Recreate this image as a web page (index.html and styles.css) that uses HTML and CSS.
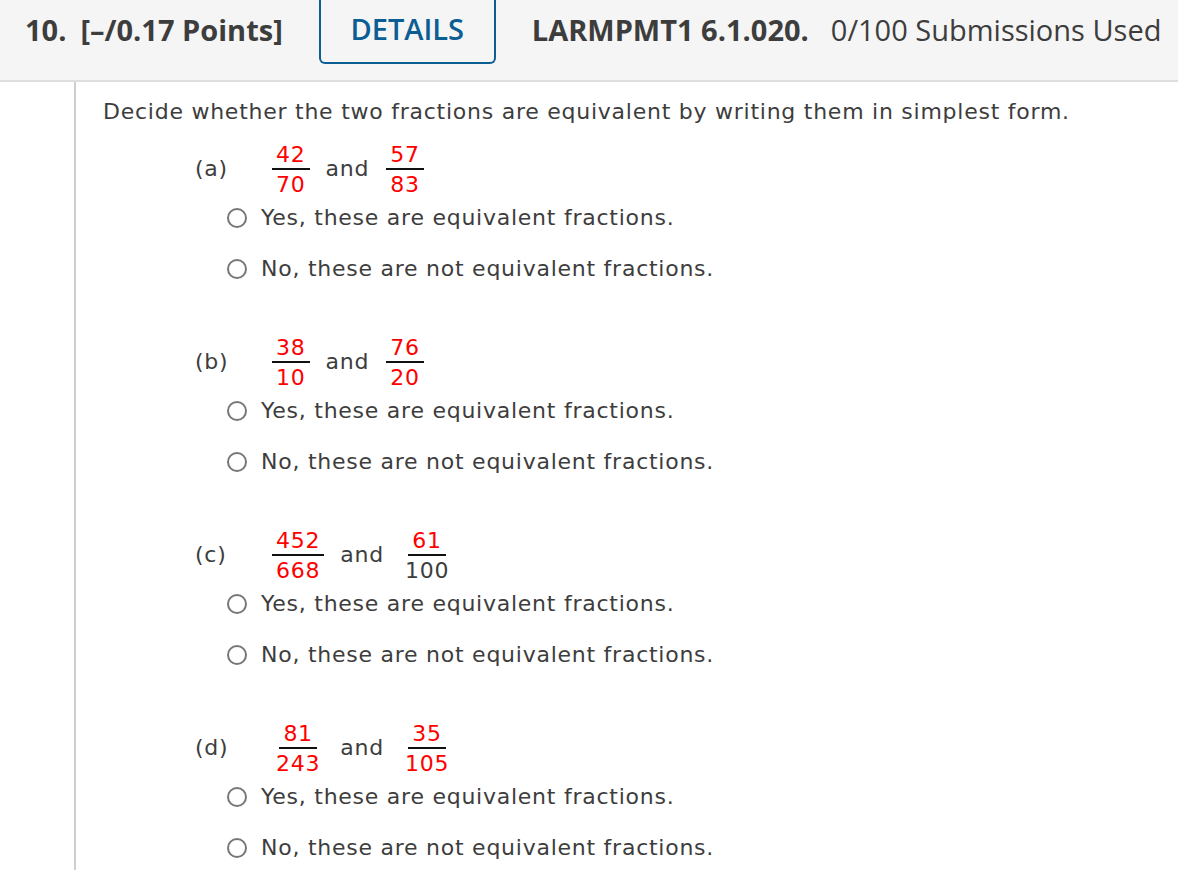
FILE: index.html
```html
<!DOCTYPE html>
<html lang="en">
<head>
  <meta charset="UTF-8">
  <title>Question 10</title>
  <link rel="stylesheet" href="styles.css">
</head>
<body>
  <div class="question-head">
    <span class="q-num">10.</span>
    <span class="q-points">[&ndash;/0.17 Points]</span>
    <a href="#" class="details-btn">DETAILS</a>
    <span class="q-code">LARMPMT1 6.1.020.</span>
    <span class="q-subs">0/100 Submissions Used</span>
  </div>

  <div class="question-body">
    <p class="prompt">Decide whether the two fractions are equivalent by writing them in simplest form.</p>

    <div class="part">
      <div class="part-row">
        <span class="part-label">(a)</span>
        <span class="frac"><span class="num red">42</span><span class="den red">70</span></span>
        <span class="and">and</span>
        <span class="frac"><span class="num red">57</span><span class="den red">83</span></span>
      </div>
      <label class="option"><span class="radio"></span>Yes, these are equivalent fractions.</label>
      <label class="option"><span class="radio"></span>No, these are not equivalent fractions.</label>
    </div>

    <div class="part">
      <div class="part-row">
        <span class="part-label">(b)</span>
        <span class="frac"><span class="num red">38</span><span class="den red">10</span></span>
        <span class="and">and</span>
        <span class="frac"><span class="num red">76</span><span class="den red">20</span></span>
      </div>
      <label class="option"><span class="radio"></span>Yes, these are equivalent fractions.</label>
      <label class="option"><span class="radio"></span>No, these are not equivalent fractions.</label>
    </div>

    <div class="part">
      <div class="part-row">
        <span class="part-label">(c)</span>
        <span class="frac"><span class="num red">452</span><span class="den red">668</span></span>
        <span class="and">and</span>
        <span class="frac"><span class="num red">61</span><span class="den">100</span></span>
      </div>
      <label class="option"><span class="radio"></span>Yes, these are equivalent fractions.</label>
      <label class="option"><span class="radio"></span>No, these are not equivalent fractions.</label>
    </div>

    <div class="part">
      <div class="part-row">
        <span class="part-label">(d)</span>
        <span class="frac"><span class="num red">81</span><span class="den red">243</span></span>
        <span class="and">and</span>
        <span class="frac"><span class="num red">35</span><span class="den red">105</span></span>
      </div>
      <label class="option"><span class="radio"></span>Yes, these are equivalent fractions.</label>
      <label class="option"><span class="radio"></span>No, these are not equivalent fractions.</label>
    </div>
  </div>
</body>
</html>
```

FILE: styles.css
```css
body {
  margin: 0;
  padding: 0;
  background-color: #ffffff;
  color: #3d3d3d;
  font-family: "DejaVu Sans", Verdana, sans-serif;
  overflow: hidden;
}

/* question header bar */
.question-head {
  display: flex;
  align-items: flex-start;
  height: 80px;
  background-color: #f5f5f5;
  border-bottom: 2px solid #dedede;
  font-family: "Open Sans", Arial, sans-serif;
  font-size: 29px;
  line-height: 60px;
  color: #3d3d3d;
}

.q-num {
  font-weight: bold;
  margin-left: 25px;
}

.q-points {
  font-weight: bold;
  margin-left: 14px;
}

.details-btn {
  display: flex;
  align-items: center;
  justify-content: center;
  box-sizing: border-box;
  width: 177px;
  height: 64px;
  margin-left: 36px;
  border: 2px solid #0b5e94;
  border-top: none;
  border-radius: 0 0 6px 6px;
  color: #0b5e94;
  font-weight: 600;
  text-decoration: none;
  padding-bottom: 4px;
}

.q-code {
  font-weight: bold;
  margin-left: 36px;
}

.q-subs {
  margin-left: 22px;
}

/* question body */
.question-body {
  margin-left: 74px;
  border-left: 2px solid #cfcfcf;
  padding: 15px 0 0 27px;
  min-height: 800px;
  font-size: 22px;
  letter-spacing: 0.75px;
}

.prompt {
  margin: 0 0 17px;
  line-height: 30px;
}

.part {
  padding-left: 92px;
  margin-bottom: 43px;
}

.part-row {
  display: flex;
  align-items: center;
  height: 48px;
}

.part-label {
  width: 77px;
}

.frac {
  display: inline-flex;
  flex-direction: column;
  align-items: center;
  line-height: 26px;
  margin-top: 4px;
}

.frac .num {
  padding: 0 4px;
  border-bottom: 2px solid #111;
}

.frac .den {
  padding: 2px 4px 0;
}

.red {
  color: #ff0000;
}

.and {
  margin: 0 17px 0 16px;
}

.option {
  display: flex;
  align-items: center;
  height: 51px;
  margin-left: 32px;
}

.radio {
  box-sizing: border-box;
  width: 20px;
  height: 20px;
  border: 2px solid #777;
  border-radius: 50%;
  margin-right: 14px;
}
```
